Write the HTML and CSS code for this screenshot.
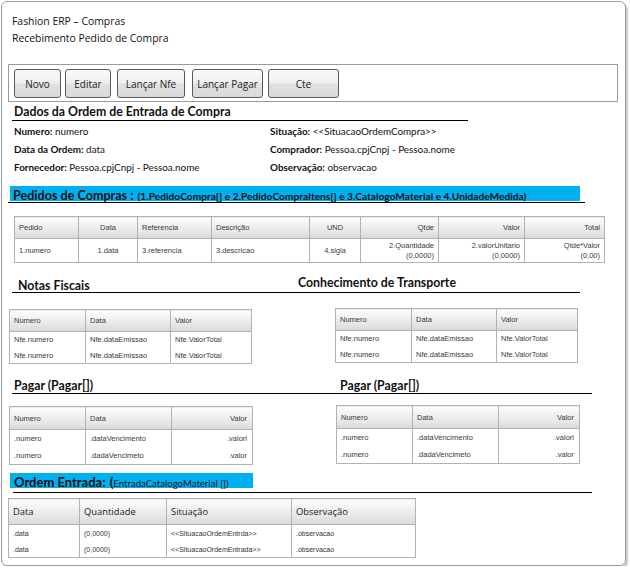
FILE: index.html
```html
<!DOCTYPE html>
<html lang="pt">
<head>
<meta charset="utf-8">
<title>Recebimento Pedido de Compra</title>
<link rel="stylesheet" href="styles.css">
</head>
<body>
<div class="frame">
  <div class="titles">
    <div>Fashion ERP – Compras</div>
    <div>Recebimento Pedido de Compra</div>
  </div>

  <div class="toolbar">
    <button class="btn b-novo">Novo</button>
    <button class="btn b-editar">Editar</button>
    <button class="btn b-nfe">Lançar Nfe</button>
    <button class="btn b-pagar">Lançar Pagar</button>
    <button class="btn b-cte">Cte</button>
  </div>

  <div class="sec-head dados"><span>Dados da Ordem de Entrada de Compra</span></div>
  <div class="fields">
    <div><b>Numero:</b> numero</div>
    <div><b>Situação:</b> &lt;&lt;SituacaoOrdemCompra&gt;&gt;</div>
    <div><b>Data da Ordem:</b> data</div>
    <div><b>Comprador:</b> Pessoa.cpjCnpj - Pessoa.nome</div>
    <div><b>Fornecedor:</b> Pessoa.cpjCnpj - Pessoa.nome</div>
    <div><b>Observação:</b> observacao</div>
  </div>

  <div class="bar-wrap pedidos">
    <div class="bar"><span class="big">Pedidos de Compras :</span> <span class="paren">(1.PedidoCompra[] e 2.PedidoCompraItens[] e 3.CatalogoMaterial e 4.UnidadeMedida)</span></div>
  </div>

  <table class="grid t-pedidos">
    <thead>
      <tr>
        <th class="c1">Pedido</th>
        <th class="c2 center">Data</th>
        <th class="c3">Referencia</th>
        <th class="c4">Descrição</th>
        <th class="c5 center">UND</th>
        <th class="c6 right">Qtde</th>
        <th class="c7 right">Valor</th>
        <th class="c8 right">Total</th>
      </tr>
    </thead>
    <tbody>
      <tr>
        <td>1.numero</td>
        <td class="center">1.data</td>
        <td>3.referencia</td>
        <td>3.descricao</td>
        <td class="center">4.sigla</td>
        <td class="right">2.Quantidade<br>(0,0000)</td>
        <td class="right">2.valorUnitario<br>(0,0000)</td>
        <td class="right">Qtde*Valor<br>(0,00)</td>
      </tr>
    </tbody>
  </table>

  <div class="sec-head two notas-head">
    <span class="h-notas">Notas Fiscais</span>
    <span class="h-cte">Conhecimento de Transporte</span>
  </div>

  <div class="cols">
    <table class="grid small3 t-notas">
      <thead>
        <tr><th class="n1">Numero</th><th class="n2">Data</th><th class="n3">Valor</th></tr>
      </thead>
      <tbody>
        <tr><td>Nfe.numero</td><td>Nfe.dataEmissao</td><td>Nfe.ValorTotal</td></tr>
        <tr><td>Nfe.numero</td><td>Nfe.dataEmissao</td><td>Nfe.ValorTotal</td></tr>
      </tbody>
    </table>
    <table class="grid small3 t-cte">
      <thead>
        <tr><th class="n1">Numero</th><th class="n2">Data</th><th class="n3">Valor</th></tr>
      </thead>
      <tbody>
        <tr><td>Nfe.numero</td><td>Nfe.dataEmissao</td><td>Nfe.ValorTotal</td></tr>
        <tr><td>Nfe.numero</td><td>Nfe.dataEmissao</td><td>Nfe.ValorTotal</td></tr>
      </tbody>
    </table>
  </div>

  <div class="sec-head two pagar-head">
    <span class="h-pagar">Pagar (Pagar[])</span>
    <span class="h-pagar">Pagar (Pagar[])</span>
  </div>

  <div class="cols">
    <table class="grid small3 pagar t-pagar-l">
      <thead>
        <tr><th class="n1">Numero</th><th class="n2">Data</th><th class="n3 right">Valor</th></tr>
      </thead>
      <tbody>
        <tr><td>.numero</td><td>.dataVencimento</td><td class="right">.valorl</td></tr>
        <tr><td>.numero</td><td>.dadaVencimeto</td><td class="right">.valor</td></tr>
      </tbody>
    </table>
    <table class="grid small3 pagar t-pagar-r">
      <thead>
        <tr><th class="n1">Numero</th><th class="n2">Data</th><th class="n3 right">Valor</th></tr>
      </thead>
      <tbody>
        <tr><td>.numero</td><td>.dataVencimento</td><td class="right">.valorl</td></tr>
        <tr><td>.numero</td><td>.dadaVencimeto</td><td class="right">.valor</td></tr>
      </tbody>
    </table>
  </div>

  <div class="bar-wrap ordem">
    <div class="bar"><span class="big">Ordem Entrada:</span> <span class="paren-big">(</span><span class="reg">EntradaCatalogoMaterial [])</span></div>
  </div>

  <table class="grid t-ordem">
    <thead>
      <tr><th class="o1">Data</th><th class="o2">Quantidade</th><th class="o3">Situação</th><th class="o4">Observação</th></tr>
    </thead>
    <tbody>
      <tr><td>.data</td><td>(0,0000)</td><td>&lt;&lt;SituacaoOrdemEntrda&gt;&gt;</td><td>.observacao</td></tr>
      <tr><td>.data</td><td>(0,0000)</td><td>&lt;&lt;SituacaoOrdemEntrada&gt;&gt;</td><td>.observacao</td></tr>
    </tbody>
  </table>
</div>
</body>
</html>
```

FILE: styles.css
```css
* { box-sizing: border-box; }

body {
  margin: 0;
  background: #fff;
  color: #000;
  font-family: "Lato", "Open Sans", sans-serif;
}

.frame {
  margin: 1px 0 0 1px;
  width: 625px;
  height: 565px;
  border: 1px solid #9c9c9c;
  border-radius: 6px;
  box-shadow: 2px 3px 2px rgba(0, 0, 0, 0.22);
  overflow: hidden;
}

/* titles */
.titles {
  height: 62px;
  padding: 11px 0 0 10px;
  font-family: "Open Sans", sans-serif;
  font-size: 10.4px;
  line-height: 17px;
  color: #111;
}

/* toolbar */
.toolbar {
  margin-left: 6px;
  width: 610px;
  height: 38px;
  border: 1px solid #9a9a9a;
  padding: 4px 5px;
  display: flex;
  align-items: flex-start;
}

.btn {
  height: 29px;
  margin: 0;
  padding: 0;
  border: 1px solid #5a5a5a;
  border-radius: 3px;
  background: linear-gradient(#f8f8f8 0%, #efefef 48%, #e0e0e0 52%, #dadada 100%);
  font-family: "Open Sans", sans-serif;
  font-size: 10px;
  color: #222;
  text-align: center;
}
.b-novo { width: 47px; margin-right: 4px; }
.b-editar { width: 46px; margin-right: 6px; }
.b-nfe { width: 68px; margin-right: 7px; }
.b-pagar { width: 71px; margin-right: 5px; }
.b-cte { width: 71px; }

/* section heads */
.sec-head {
  border-bottom: 1px solid #000;
  font-weight: 700;
  font-size: 12.3px;
  line-height: 16px;
  color: #111;
}
.dados {
  margin: 2px 0 0 10px;
  width: 456px;
  padding-left: 2px;
}

.two {
  display: grid;
  align-items: end;
}
.notas-head {
  margin: 12px 0 0 10px;
  width: 568px;
  height: 18px;
  grid-template-columns: 286px 1fr;
}
.h-notas { padding-left: 6px; }
.h-cte { padding-bottom: 3px; }

.pagar-head {
  margin: 14px 0 0 10px;
  width: 580px;
  height: 16px;
  line-height: 14px;
  grid-template-columns: 326px 1fr;
}
.h-pagar { padding-left: 2px; }

/* fields */
.fields {
  margin: 1px 0 0 12px;
  display: grid;
  grid-template-columns: 256px 1fr;
  grid-auto-rows: 18px;
  align-items: center;
  font-size: 9.9px;
  color: #111;
}
.fields b { font-weight: 700; }

/* blue bars */
.bar-wrap {
  border-bottom: 1px solid #000;
}
.bar {
  background: #00b0f0;
  height: 15px;
  line-height: 15px;
  white-space: nowrap;
  color: #111;
}
.pedidos {
  margin: 10px 0 0 6px;
  width: 577px;
  padding-bottom: 1px;
}
.pedidos .bar {
  margin-left: 2px;
  width: 570px;
  padding-left: 3px;
}
.bar .big {
  font-weight: 700;
  font-size: 12.6px;
}
.bar .paren {
  font-weight: 700;
  font-size: 10.2px;
}
.ordem {
  margin: 8px 0 0 11px;
  width: 579px;
  padding-bottom: 4px;
}
.ordem .bar {
  margin-left: -3px;
  width: 243px;
  padding-left: 4px;
}
.ordem .bar .big { font-size: 13px; }
.bar .paren-big {
  font-weight: 700;
  font-size: 13.5px;
}
.bar .reg {
  font-size: 9.6px;
}

/* tables */
table.grid {
  border-collapse: collapse;
  table-layout: fixed;
  font-family: "Liberation Sans", Arial, sans-serif;
  font-size: 7.5px;
  color: #3a3a3a;
}
table.grid th,
table.grid td {
  border: 1px solid #b2b2b2;
  padding: 0 4px;
  font-weight: normal;
  text-align: left;
  white-space: nowrap;
  overflow: hidden;
}
table.grid td {
  border-top: none;
  border-bottom: none;
}
table.grid tbody tr:last-child td {
  border-bottom: 1px solid #b2b2b2;
}
table.grid thead th {
  background: linear-gradient(#fdfdfd, #e6e6e6 70%, #d8d8d8);
}
.center { text-align: center !important; }
.right { text-align: right !important; }

.t-pedidos {
  margin: 13px 0 0 12px;
  width: 590px;
}
.t-pedidos thead tr { height: 22px; }
.t-pedidos tbody tr { height: 24px; }
.t-pedidos td { line-height: 10px; }
.t-pedidos .c1 { width: 64px; }
.t-pedidos .c2 { width: 59px; }
.t-pedidos .c3 { width: 74px; }
.t-pedidos .c4 { width: 98px; }
.t-pedidos .c5 { width: 51px; }
.t-pedidos .c6 { width: 78px; }
.t-pedidos .c7 { width: 86px; }
.t-pedidos .c8 { width: 80px; }

.cols {
  display: grid;
  grid-template-columns: 327px 1fr;
  align-items: start;
}
.small3 th, .small3 td { padding: 0 6px; }
.small3 thead tr { height: 22px; }
.small3 tbody tr { height: 16px; }
.small3 .n1 { width: 76px; }
.small3 .n2 { width: 85px; }
.small3 .n3 { width: 81px; }

.t-notas { margin: 16px 0 0 7px; width: 242px; }
.t-cte { margin: 15px 0 0 6px; width: 242px; }

.pagar thead tr { height: 23px; }
.pagar tbody tr { height: 17.5px; }
.pagar .n2 { width: 86px; }
.pagar td.right, .pagar th.right { padding-right: 5px; }
.t-pagar-l { margin: 12px 0 0 7px; width: 243px; }
.t-pagar-r { margin: 11px 0 0 7px; width: 243px; }

.t-ordem {
  margin: 5px 0 0 6px;
  width: 407px;
}
.t-ordem th, .t-ordem td { padding: 0 5px; }
.t-ordem thead tr { height: 26px; }
.t-ordem thead th {
  font-family: "Open Sans", sans-serif;
  font-size: 9.4px;
  color: #222;
}
.t-ordem tbody tr { height: 16.5px; }
.t-ordem tbody td { font-size: 7px; color: #333; }
.t-ordem .o1 { width: 71px; }
.t-ordem .o2 { width: 87px; }
.t-ordem .o3 { width: 125px; }
.t-ordem .o4 { width: 124px; }
```
